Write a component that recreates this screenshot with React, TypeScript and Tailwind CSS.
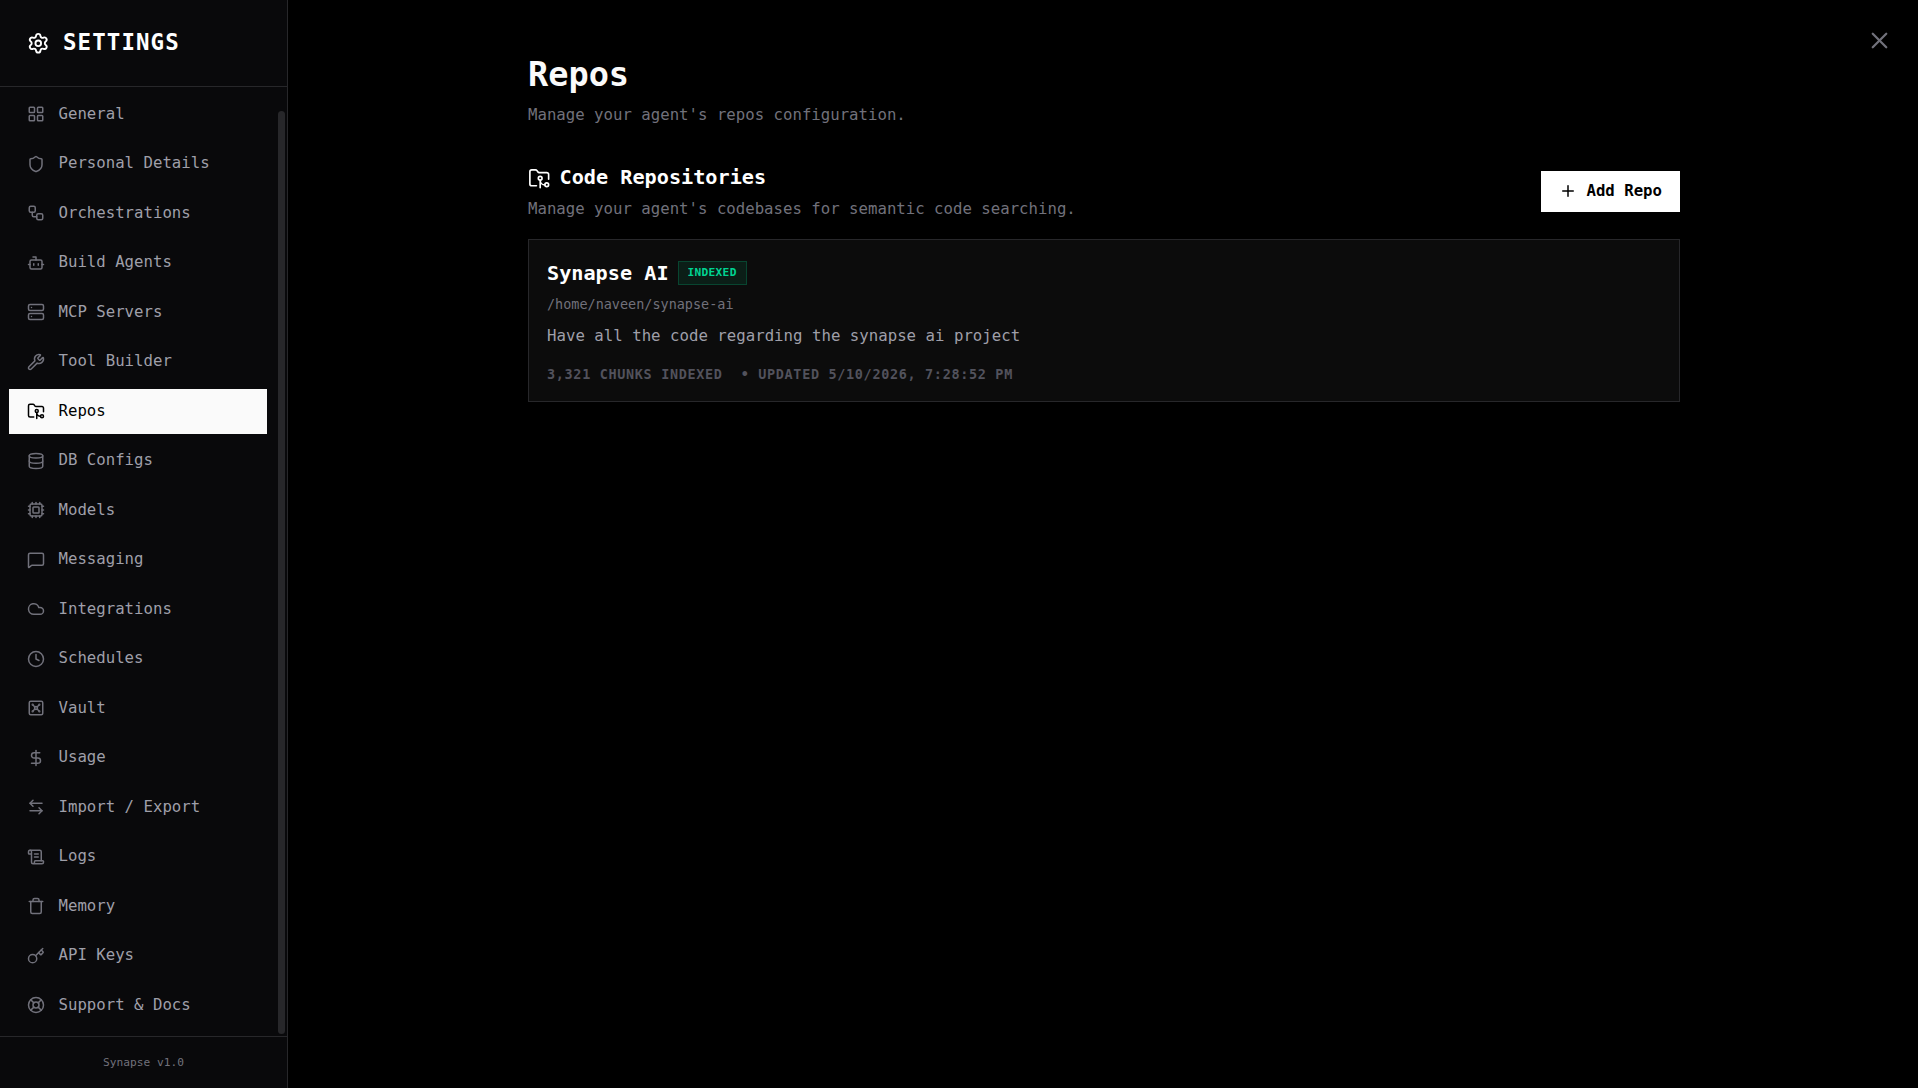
import {
  ArrowLeftRight,
  Bot,
  Clock,
  Cloud,
  Cpu,
  Database,
  DollarSign,
  FolderGit2,
  Key,
  LayoutGrid,
  LifeBuoy,
  MessageSquare,
  Plus,
  ScrollText,
  Server,
  Settings,
  Shield,
  Trash,
  Vault,
  Workflow,
  Wrench,
  X,
} from 'lucide-react';

const NAV_ITEMS = [
  { label: 'General', icon: LayoutGrid },
  { label: 'Personal Details', icon: Shield },
  { label: 'Orchestrations', icon: Workflow },
  { label: 'Build Agents', icon: Bot },
  { label: 'MCP Servers', icon: Server },
  { label: 'Tool Builder', icon: Wrench },
  { label: 'Repos', icon: FolderGit2 },
  { label: 'DB Configs', icon: Database },
  { label: 'Models', icon: Cpu },
  { label: 'Messaging', icon: MessageSquare },
  { label: 'Integrations', icon: Cloud },
  { label: 'Schedules', icon: Clock },
  { label: 'Vault', icon: Vault },
  { label: 'Usage', icon: DollarSign },
  { label: 'Import / Export', icon: ArrowLeftRight },
  { label: 'Logs', icon: ScrollText },
  { label: 'Memory', icon: Trash },
  { label: 'API Keys', icon: Key },
  { label: 'Support & Docs', icon: LifeBuoy },
];

function Sidebar({ active }: { active: string }) {
  return (
    <aside className="w-72 shrink-0 flex flex-col bg-[#09090b] border-r border-[#27272a]">
      <div className="h-[87px] shrink-0 flex items-center gap-[13.5px] px-[27px] border-b border-[#27272a]">
        <Settings className="size-[22.5px] text-white" />
        <h2 className="text-[22.4px] leading-[31.5px] font-bold tracking-wider text-white">SETTINGS</h2>
      </div>

      <div className="flex-1 min-h-0 flex overflow-hidden">
        <nav className="flex-1 flex flex-col gap-[4.5px] px-[9px] pt-[4.5px]">
          {NAV_ITEMS.map(({ label, icon: Icon }) => (
            <button
              key={label}
              className={
                label === active
                  ? 'h-[45px] shrink-0 flex items-center gap-[13.5px] px-[18px] bg-[#fafafa] text-black'
                  : 'h-[45px] shrink-0 flex items-center gap-[13.5px] px-[18px] text-[#9f9fa9]'
              }
            >
              <Icon className={label === active ? 'size-[18px] text-black' : 'size-[18px] text-[#71717b]'} />
              <span className="text-[15.7px] leading-[22.5px]">{label}</span>
            </button>
          ))}
        </nav>
        <div className="w-[11px] px-0.5 pt-6 pb-0.5 flex">
          <div className="flex-1 rounded-full bg-[#27272a]" />
        </div>
      </div>

      <div className="h-[52px] shrink-0 border-t border-[#27272a] flex items-center justify-center">
        <span className="text-[11.2px] leading-[17px] text-[#71717b]">Synapse v1.0</span>
      </div>
    </aside>
  );
}

function RepoCard() {
  return (
    <div className="border border-[#27272a] bg-[#0c0c0c] p-[18px]">
      <div className="flex items-center gap-[9px]">
        <h4 className="text-[20.2px] leading-[31.5px] font-bold text-white">Synapse AI</h4>
        <span className="h-6 flex items-center px-[9px] border border-[#00bc7d]/25 bg-[#00bc7d]/10 text-[11.2px] tracking-wide font-bold text-[#00d492]">
          INDEXED
        </span>
      </div>
      <p className="mt-[5.5px] text-[13.47px] leading-[18px] text-[#71717b]">/home/naveen/synapse-ai</p>
      <p className="mt-[12.5px] text-[15.72px] leading-[22.5px] text-[#9f9fa9]">
        Have all the code regarding the synapse ai project
      </p>
      <div className="mt-[17px] flex gap-[18px] text-[13.47px] leading-[18px] tracking-wider font-bold text-[#52525c]">
        <span>3,321 CHUNKS INDEXED</span>
        <span>• UPDATED 5/10/2026, 7:28:52 PM</span>
      </div>
    </div>
  );
}

export default function App() {
  return (
    <div className="h-screen overflow-hidden bg-black">
      <div className="relative flex h-full w-[1920px] font-['DejaVu_Sans_Mono',monospace]">
        <Sidebar active="Repos" />

        <main className="flex-1 pt-[55px]">
          <div className="w-[1152px] mx-auto">
            <h1 className="text-[33.6px] leading-[40.5px] font-bold text-[#fafafa]">Repos</h1>
            <p className="mt-2 text-[15.7px] leading-[22.5px] text-[#71717b]">
              Manage your agent's repos configuration.
            </p>

            <div className="mt-9 flex items-center justify-between">
              <div>
                <h3 className="flex items-center gap-[9px] text-[20.2px] leading-[31.5px] font-bold text-white">
                  <FolderGit2 className="size-[22.5px]" strokeWidth={1.75} />
                  Code Repositories
                </h3>
                <p className="mt-[4.5px] text-[15.7px] leading-[22.5px] text-[#71717b]">
                  Manage your agent's codebases for semantic code searching.
                </p>
              </div>
              <button className="flex items-center gap-[9px] px-[18px] py-[9px] bg-white text-black text-[15.7px] leading-[22.5px] font-bold">
                <Plus className="size-[18px]" />
                Add Repo
              </button>
            </div>

            <div className="mt-[18px]">
              <RepoCard />
            </div>
          </div>
        </main>

        <button className="absolute top-[27px] right-[27px] text-[#71717b]">
          <X className="size-[27px]" />
        </button>
      </div>
    </div>
  );
}
